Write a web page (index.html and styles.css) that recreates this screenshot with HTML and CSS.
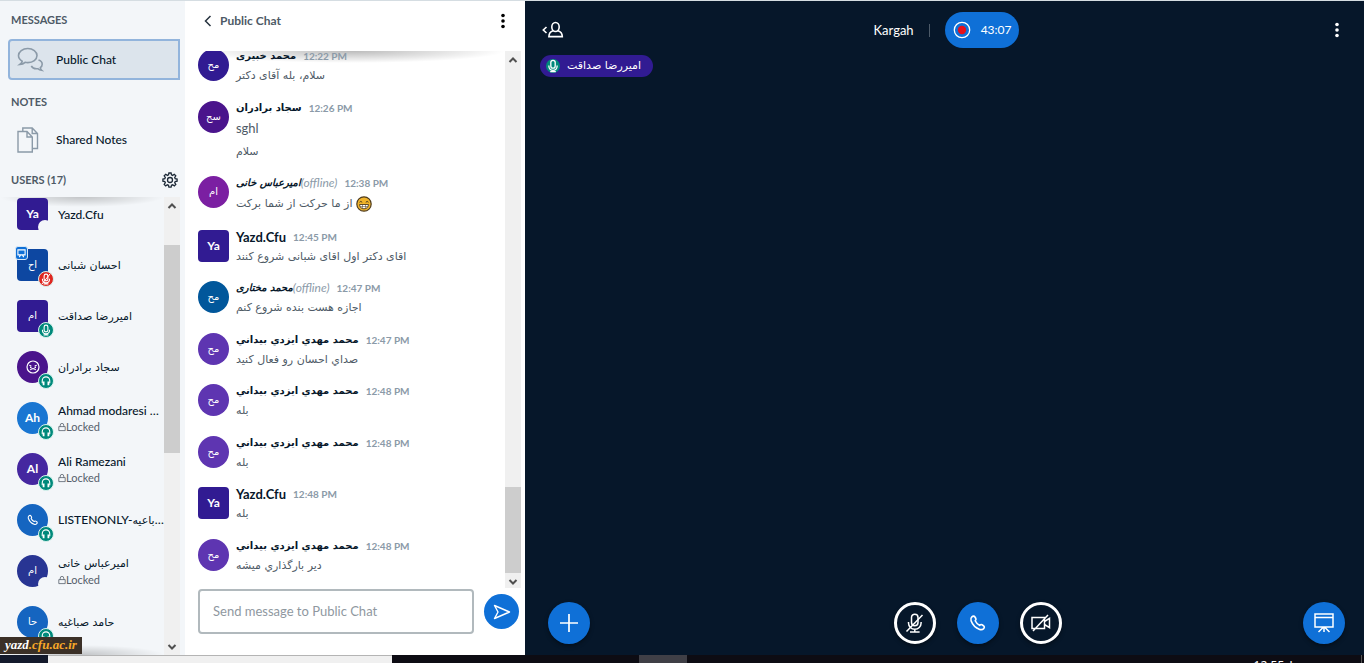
FILE: index.html
```html
<!DOCTYPE html>
<html lang="en">
<head>
<meta charset="utf-8">
<title>Kargah</title>
<link rel="stylesheet" href="styles.css">
</head>
<body>
<svg class="defs" aria-hidden="true">
  <symbol id="i-head" viewBox="0 0 16 16"><path d="M3 11V7.500a5 5 0 0 1 10 0V11" fill="none" stroke="currentColor" stroke-width="1.500"/><path d="M4.800 8.500v5M11.200 8.500v5" fill="none" stroke="currentColor" stroke-width="2.400"/></symbol>
  <symbol id="i-mic" viewBox="0 0 16 16"><rect x="5.500" y="1.500" width="5" height="9" rx="2.500" fill="none" stroke="currentColor" stroke-width="1.500"/><path d="M3.300 7.500v.8a4.700 4.700 0 0 0 9.400 0v-.8M8 12.900V14M4.800 14.500h6.400" fill="none" stroke="currentColor" stroke-width="1.500"/></symbol>
  <symbol id="i-phone" viewBox="0 0 20 20"><path d="M3.200 3.100c1.200-1.100 2.600-1 3.400.2l1 1.700c.6 1-.1 1.800-.7 2.500.9 2 2.700 3.900 4.900 5.100.7-.7 1.700-1.300 2.600-.7l1.700 1.100c1.200.8 1.200 2.200.2 3.200-1.200 1.200-2.700 1.500-4.400.9C7.600 15.600 4 12.100 2.300 7.500 1.700 5.800 1.900 4.300 3.200 3.100z" fill="none" stroke="currentColor" stroke-width="1.800" stroke-linejoin="round"/></symbol>
  <symbol id="i-lock" viewBox="0 0 10 12"><path d="M1 5.500h8v5H1zM2.800 5.500V3.700a2.200 2.200 0 0 1 4.400 0v1.800" fill="none" stroke="currentColor" stroke-width="1"/></symbol>
  <symbol id="i-up" viewBox="0 0 10 8"><path d="M1.500 6 5 2.500 8.500 6" fill="none" stroke="#505050" stroke-width="2"/></symbol>
  <symbol id="i-down" viewBox="0 0 10 8"><path d="M1.500 2 5 5.500 8.500 2" fill="none" stroke="#505050" stroke-width="2"/></symbol>
  <symbol id="i-dots" viewBox="0 0 6 16"><circle cx="3" cy="2.500" r="1.800"/><circle cx="3" cy="8" r="1.800"/><circle cx="3" cy="13.500" r="1.800"/></symbol>
</svg>
<div class="app">
  <nav class="sidebar">
    <h2>Messages</h2>
    <a class="nav-item active" href="#chat">
      <svg width="27" height="26" viewBox="0 0 27 26" fill="none" stroke="#8b9aa8" stroke-width="1.600"><path d="M5.200 14.300C3 13 1.500 11 1.500 8.600c0-4 4.200-7.100 9.300-7.100S20 4.600 20 8.600s-4.100 7-9.200 7c-1 0-1.900-.1-2.700-.3-1.500 1.400-3 2-5.300 2.200 1.300-.9 2.200-1.900 2.400-3.200z"/><path d="M21.500 13c2.200.7 3.700 2.300 3.700 4.200 0 1.400-.7 2.600-1.900 3.400 0 1 .4 1.900 1.300 2.700-1.600-.2-2.700-.7-3.600-1.600-3 .4-5.700-.7-6.700-2.800"/></svg>
      <span>Public Chat</span>
    </a>
    <h2>Notes</h2>
    <a class="nav-item" href="#notes">
      <svg width="27" height="26" viewBox="0 0 27 26" fill="none" stroke="#8b9aa8" stroke-width="1.400"><path d="M1 4.500h9l5.300 5.500v15H1zM10 4.500V10h5.300M5.800 4.500V1h9.400l5.300 5.500v15h-5M15.200 1v5.500h5.300"/></svg>
      <span>Shared Notes</span>
    </a>
    <div class="users-head">
      <h2>Users (17)</h2>
      <button class="plain" aria-label="Manage users"><svg width="16" height="16" viewBox="0 0 16 16" fill="none" stroke="#1d2a38" stroke-width="1.300"><circle cx="8" cy="8" r="2.500"/><path d="M6.900 1h2.200l.4 1.900 1.100.5 1.700-1.100 1.500 1.500-1.100 1.700.5 1.100 1.900.4v2.200l-1.900.4-.5 1.100 1.100 1.700-1.500 1.500-1.700-1.100-1.100.5-.4 1.900H6.900l-.4-1.900-1.100-.5-1.700 1.100-1.500-1.500 1.100-1.700-.5-1.100L.9 9.200V7l1.900-.4.5-1.100-1.100-1.700 1.500-1.500 1.700 1.100 1.100-.5z"/></svg></button>
    </div>
    <div class="users">
      <ul class="user-list">
        <li><span class="avatar sq indigo cut">Ya</span><span class="who">Yazd.Cfu</span></li>
        <li><span class="avatar sq navy fa">اح<i class="pres"><svg width="9" height="9" viewBox="0 0 10 10" fill="none" stroke="#fff" stroke-width="1.200"><path d="M1 1h8v5.500H1zM2.500 9 4 6.500M7.500 9 6 6.500"/></svg></i><i class="badge red"><svg width="12" height="12"><use href="#i-mic"/><path d="M2 11 10 1" stroke="#fff"/></svg></i></span><span class="who fa">احسان شبانی</span></li>
        <li><span class="avatar sq indigo fa">ام<i class="badge"><svg width="12" height="12"><use href="#i-mic"/></svg></i></span><span class="who fa">امیررضا صداقت</span></li>
        <li><span class="avatar violet"><svg width="14" height="14" viewBox="0 0 14 14" fill="none" stroke="#fff" stroke-width="1.200"><circle cx="7" cy="7" r="6"/><path d="M3.300 5.200l2 .8M10.700 5.200l-2 .8M4.300 10c1-1.800 4.400-1.800 5.400 0M4 7.300h1.500M8.500 7.300H10"/></svg><i class="badge"><svg width="12" height="12"><use href="#i-head"/></svg></i></span><span class="who fa">سجاد برادران</span></li>
        <li><span class="avatar blue">Ah<i class="badge"><svg width="12" height="12"><use href="#i-head"/></svg></i></span><span class="who">Ahmad modaresi …<small><svg width="8" height="10"><use href="#i-lock"/></svg>Locked</small></span></li>
        <li><span class="avatar purple">Al<i class="badge"><svg width="12" height="12"><use href="#i-head"/></svg></i></span><span class="who">Ali Ramezani<small><svg width="8" height="10"><use href="#i-lock"/></svg>Locked</small></span></li>
        <li><span class="avatar royal"><svg width="12" height="12"><use href="#i-phone"/></svg><i class="badge"><svg width="12" height="12"><use href="#i-head"/></svg></i></span><span class="who">LISTENONLY-<span class="fa">باعیه</span>…</span></li>
        <li><span class="avatar slate fa cut">ام</span><span class="who"><span class="fa">امیرعباس خانی</span><small><svg width="8" height="10"><use href="#i-lock"/></svg>Locked</small></span></li>
        <li><span class="avatar royal fa">حا<i class="badge"><svg width="12" height="12"><use href="#i-head"/></svg></i></span><span class="who fa">حامد صباغیه</span></li>
      </ul>
      <div class="scroll users-scroll"><svg width="10" height="8"><use href="#i-up"/></svg><div class="track"><div class="thumb"></div></div><svg width="10" height="8"><use href="#i-down"/></svg></div>
    </div>
    <div class="watermark"><b>yazd</b>.cfu.ac.ir</div>
  </nav>

  <section class="chat" id="chat">
    <header>
      <button class="plain back"><svg width="8" height="12" viewBox="0 0 8 12" fill="none" stroke="#27333f" stroke-width="1.500"><path d="M6.500 1 1.500 6l5 5"/></svg>Public Chat</button>
      <button class="plain" aria-label="Chat options"><svg width="6" height="16"><use href="#i-dots"/></svg></button>
    </header>
    <div class="log">
      <div class="messages">
        <article><span class="avatar indigo fa">مح</span><div><h3><b class="fa">محمد خبیری</b><time>12:22 PM</time></h3><p class="fa">سلام، بله آقای دکتر</p></div></article>
        <article><span class="avatar violet fa">سج</span><div><h3><b class="fa">سجاد برادران</b><time>12:26 PM</time></h3><p>sghl</p><p class="fa">سلام</p></div></article>
        <article><span class="avatar magenta fa">ام</span><div><h3><b class="fa off">امیرعباس خانی</b><em>(offline)</em><time>12:38 PM</time></h3><p class="fa emo">از ما حرکت از شما برکت <svg width="16" height="16" viewBox="0 0 16 16"><circle cx="8" cy="8" r="7.200" fill="#f0b42c" stroke="#4e3b1d" stroke-width="1.200"/><path d="M3.500 6.300q1.300-1.800 2.700 0M9.800 6.300q1.300-1.800 2.700 0" fill="none" stroke="#4e3b1d"/><path d="M3.500 8.500h9q-.5 4.300-4.500 4.300T3.500 8.500z" fill="#fff" stroke="#4e3b1d" stroke-width=".9"/><path d="M4 10.500h8M6.500 8.500v4M9.500 8.500v4" stroke="#4e3b1d" stroke-width=".5"/></svg></p></div></article>
        <article><span class="avatar sq indigo">Ya</span><div><h3><b>Yazd.Cfu</b><time>12:45 PM</time></h3><p class="fa">اقای دکتر اول اقای شبانی شروع کنند</p></div></article>
        <article><span class="avatar teal fa">مح</span><div><h3><b class="fa off">محمد مختاری</b><em>(offline)</em><time>12:47 PM</time></h3><p class="fa">اجازه هست بنده شروع کنم</p></div></article>
        <article><span class="avatar grape fa">مح</span><div><h3><b class="fa">محمد مهدي ايزدي بيداني</b><time>12:47 PM</time></h3><p class="fa">صداي احسان رو فعال كنيد</p></div></article>
        <article><span class="avatar grape fa">مح</span><div><h3><b class="fa">محمد مهدي ايزدي بيداني</b><time>12:48 PM</time></h3><p class="fa">بله</p></div></article>
        <article><span class="avatar grape fa">مح</span><div><h3><b class="fa">محمد مهدي ايزدي بيداني</b><time>12:48 PM</time></h3><p class="fa">بله</p></div></article>
        <article><span class="avatar sq indigo">Ya</span><div><h3><b>Yazd.Cfu</b><time>12:48 PM</time></h3><p class="fa">بله</p></div></article>
        <article><span class="avatar grape fa">مح</span><div><h3><b class="fa">محمد مهدي ايزدي بيداني</b><time>12:48 PM</time></h3><p class="fa">دير بارگذاري ميشه</p></div></article>
      </div>
      <div class="scroll chat-scroll"><svg width="10" height="8"><use href="#i-up"/></svg><div class="track"><div class="thumb"></div></div><svg width="10" height="8"><use href="#i-down"/></svg></div>
    </div>
    <form class="compose">
      <input type="text" placeholder="Send message to Public Chat" aria-label="Send message to Public Chat">
      <button type="button" class="send" aria-label="Send message"><svg width="18" height="16" viewBox="0 0 18 16" fill="none" stroke="#fff" stroke-width="1.400" stroke-linejoin="round"><path d="M1.500 1.500 16.500 8l-15 6.500L5 8z"/></svg></button>
    </form>
  </section>

  <main class="media">
    <header>
      <button class="plain" aria-label="Toggle user list"><svg width="22" height="18" viewBox="0 0 22 18" fill="none" stroke="#fff" stroke-width="1.600"><path d="M4.500 6 1.300 9l3.200 3"/><ellipse cx="13.500" cy="6" rx="3.700" ry="4.500"/><path d="M11 9.800c-3 .9-4 2.600-4.100 5.800h13.400c-.1-3.200-1.300-4.900-4.300-5.800"/></svg></button>
      <div class="title"><span>Kargah</span><i></i><button class="rec"><svg width="18" height="18" viewBox="0 0 18 18"><circle cx="9" cy="9" r="7.700" fill="none" stroke="#fff" stroke-width="1.300"/><circle cx="9" cy="9" r="4.200" fill="#e5101c"/></svg>43:07</button></div>
      <button class="plain more" aria-label="Options"><svg width="6" height="16"><use href="#i-dots"/></svg></button>
    </header>
    <button class="talker"><i><svg width="14" height="14"><use href="#i-mic"/></svg></i><span class="fa">امیررضا صداقت</span></button>
    <footer>
      <button class="act" aria-label="Actions"><svg width="20" height="20" viewBox="0 0 20 20"><path d="M10 1v18M1 10h18" stroke="#fff" stroke-width="1.700"/></svg></button>
      <div class="mid">
        <button class="act ring" aria-label="Unmute"><svg width="20" height="20" viewBox="0 0 20 20" fill="none" stroke="#fff" stroke-width="1.500"><rect x="6.500" y="1.200" width="6.500" height="11.500" rx="3.200"/><path d="M3.500 9v1a6.300 6.300 0 0 0 12.600 0V9M9.800 16.300v2.200M5 18.900h9.600M1.500 18.500 17.500 2"/></svg></button>
        <button class="act" aria-label="Leave audio"><svg width="18" height="18"><use href="#i-phone"/></svg></button>
        <button class="act ring" aria-label="Share webcam"><svg width="20" height="20" viewBox="0 0 20 20" fill="none" stroke="#fff" stroke-width="1.500"><path d="M1 4.500h12.500v11H1zM13.500 8.500l5-3.200v9.400l-5-3.200M2 18 17 2"/></svg></button>
      </div>
      <button class="act" aria-label="Restore presentation"><svg width="20" height="20" viewBox="0 0 20 20" fill="none" stroke="#fff" stroke-width="1.500"><path d="M1 1h18v13H1zM1 4.500h18M10 14v5M9 14.500 4.500 19M11 14.500l4.500 4.500"/></svg></button>
    </footer>
  </main>
</div>
<div class="taskbar"><div class="start"></div><div class="search"></div><div class="tasks"></div><div class="task"></div><div class="tray">12:55 ب.ظ</div></div>
</body>
</html>
```
FILE: styles.css
```css
* { box-sizing: border-box; }
body {
  margin: 0;
  height: 100vh;
  display: flex;
  flex-direction: column;
  overflow: hidden;
  font: 13px/18px Lato, "DejaVu Sans", sans-serif;
  color: #06172a;
  background: #0d0c13;
}
h2, h3, p, ul { margin: 0; padding: 0; }
button { font: inherit; border: 0; padding: 0; cursor: pointer; }
svg { flex: none; }
.defs { position: absolute; width: 0; height: 0; }
.plain { background: none; color: inherit; display: flex; align-items: center; }
.fa { font-family: "DejaVu Sans", sans-serif; font-size: 11px; }

.app {
  flex: 1;
  min-height: 0;
  display: grid;
  grid-template-columns: 185px 340px 1fr;
  border-top: 1px solid #d5dde2;
}

/* Sidebar */
.sidebar {
  position: relative;
  display: flex;
  flex-direction: column;
  min-height: 0;
  background: #f3f6f9;
  padding-top: 10px;
}
.sidebar h2 {
  font-size: 11px;
  line-height: 18px;
  font-weight: 700;
  text-transform: uppercase;
  color: #4e5a66;
  padding-left: 11px;
}
.nav-item {
  display: flex;
  align-items: center;
  gap: 12px;
  height: 41px;
  margin: 10px 5px 13px 8px;
  padding-left: 7px;
  border: 2px solid transparent;
  border-radius: 4px 0 0 4px;
  color: inherit;
  text-decoration: none;
  font-size: 12px;
  font-weight: 500;
}
.nav-item.active { background: #dce4ec; border-color: #92b4dc; }
h2 + .nav-item:not(.active) { margin: 8px 5px 11px 8px; }
.users-head { display: flex; justify-content: space-between; padding-right: 7px; }
.users { flex: 1; min-height: 0; display: flex; margin-top: 8px; padding-right: 5px; overflow: hidden; }
.user-list {
  flex: 1;
  min-width: 0;
  list-style: none;
  display: flex;
  flex-direction: column;
  justify-content: space-between;
  padding: 1px 0 17px 17px;
  background:
    radial-gradient(farthest-side at 50% 0, #0003, transparent) 50% 0 / 100% 10px no-repeat,
    radial-gradient(farthest-side at 50% 100%, #0003, transparent) 50% 100% / 100% 10px no-repeat;
}
.user-list li { display: flex; align-items: center; gap: 10px; height: 32px; }
.avatar {
  position: relative;
  flex: none;
  width: 31px;
  height: 32px;
  border-radius: 50%;
  display: flex;
  align-items: center;
  justify-content: center;
  color: #fff;
  font-size: 12px;
  font-weight: 700;
}
.avatar.fa { font-size: 10px; font-weight: 400; }
.sq { border-radius: 4px; }
.indigo { background: #311b92; }
.navy { background: #0d47a1; }
.violet { background: #4a148c; }
.blue { background: #1976d2; }
.purple { background: #4527a0; }
.royal { background: #1565c0; }
.slate { background: #283593; }
.magenta { background: #7b1fa2; }
.teal { background: #01579b; }
.grape { background: #5e35b1; }
.cut::after {
  content: "";
  position: absolute;
  right: -4px;
  bottom: -4px;
  width: 14px;
  height: 14px;
  border-radius: 50%;
  background: #f3f6f9;
}
.badge {
  position: absolute;
  right: -6px;
  bottom: -6px;
  width: 16px;
  height: 16px;
  border: 1px solid #d9f3ee;
  border-radius: 50%;
  background: #00897b;
  display: flex;
  align-items: center;
  justify-content: center;
}
.badge.red { background: #df2721; }
.pres {
  position: absolute;
  left: -2px;
  top: -3px;
  width: 13px;
  height: 14px;
  border: 1px solid #d9e8f5;
  border-radius: 3px;
  background: #0f70d7;
  display: flex;
  align-items: center;
  justify-content: center;
}
.who { min-width: 0; font-size: 12px; font-weight: 500; line-height: 17px; white-space: nowrap; }
.who.fa, .who .fa { font-size: 11px; font-weight: 400; }
.who small { display: flex; align-items: center; font-size: 11px; font-weight: 400; line-height: 16px; color: #55606b; }

.scroll { width: 16px; background: #f0f0f0; display: flex; flex-direction: column; align-items: center; padding: 5px 0 4px; flex: none; }
.track { flex: 1; width: 100%; display: flex; flex-direction: column; }
.thumb { background: #cdcdcd; }
.users-scroll .thumb { margin-top: 35px; height: 48%; }
.chat-scroll { padding-bottom: 2px; }
.chat-scroll .track { justify-content: flex-end; padding-bottom: 5px; }
.chat-scroll .thumb { height: 86px; }

.watermark {
  position: absolute;
  left: 0;
  bottom: 1px;
  width: 82px;
  height: 17px;
  padding-left: 5px;
  background: #3b3027;
  color: #f7a829;
  font: italic bold 13px/16px "Liberation Serif", serif;
}
.watermark b { color: #fff; }

/* Chat */
.chat { display: flex; flex-direction: column; min-width: 0; min-height: 0; background: #fff; padding-left: 13px; }
.chat header { display: flex; justify-content: space-between; align-items: center; height: 50px; padding: 0 19px 10px 6px; }
.back { gap: 8px; font-size: 12px; font-weight: 700; color: #4e5a66; }
.log { flex: 1; min-height: 0; display: flex; padding-right: 4px; overflow: hidden; }
.messages {
  flex: 1;
  min-width: 0;
  margin-top: -2px;
  padding-bottom: 11px;
  display: flex;
  flex-direction: column;
  justify-content: space-between;
  background: radial-gradient(farthest-side at 50% 0, #0004, transparent) 50% 2px / 100% 12px no-repeat;
}
article { display: flex; gap: 7px; }
article h3 { display: flex; align-items: center; height: 14px; font-size: 13px; font-weight: 400; }
article h3 .fa { font-size: 10px; }
.off { font-style: italic; }
article em { font-size: 12px; color: #8b9aa8; }
time { margin-left: 7px; font-size: 10px; font-weight: 700; color: #8b9aa8; }
article p { line-height: 24px; height: 24px; padding-top: 1px; color: #4e5a66; }
.emo { display: flex; align-items: center; gap: 4px; height: 26px; }
.compose { display: flex; align-items: center; gap: 10px; padding: 1px 6px 21px 0; }
.compose input {
  flex: 1;
  min-width: 0;
  height: 45px;
  border: 2px solid #b1b9bd;
  border-radius: 4px;
  padding: 0 13px 2px;
  font: inherit;
}
.compose input::placeholder { color: #8f989f; opacity: 1; }
.send { width: 35px; height: 35px; border-radius: 50%; background: #0f70d7; display: flex; align-items: center; justify-content: center; }

/* Media area */
.media { display: flex; flex-direction: column; min-width: 0; background: #06172a; color: #fff; }
.media header { display: grid; grid-template-columns: 1fr auto 1fr; align-items: center; height: 54px; padding: 4px 24px 0 17px; }
.title { display: flex; align-items: center; gap: 15px; padding-left: 11px; }
.title i { width: 1px; height: 13px; background: #4c5a68; }
.rec { display: flex; align-items: center; gap: 10px; height: 36px; padding: 0 8px; border-radius: 18px; background: #0f70d7; color: #fff; font-size: 12px; }
.more { justify-self: end; }
.more svg { fill: #fff; }
.talker { align-self: flex-start; display: flex; align-items: center; gap: 7px; height: 22px; margin-left: 15px; padding: 0 12px 0 6px; border-radius: 11px; background: #311b92; color: #fff; }
.talker i { width: 14px; height: 14px; border-radius: 50%; background: #00897b; display: flex; }
.media footer { margin-top: auto; display: flex; justify-content: space-between; padding: 0 19px 11px 23px; }
.mid { display: flex; gap: 21px; padding-left: 63px; }
.act { width: 42px; height: 42px; border-radius: 50%; background: #0f70d7; color: #fff; display: flex; align-items: center; justify-content: center; box-shadow: 0 2px 4px #0006; }
.ring { background: none; border: 3px solid #fff; }

/* Taskbar */
.taskbar { flex: none; height: 8px; display: grid; grid-template-columns: 48px 344px 247px 48px 1fr; overflow: hidden; background: #0d0c13; }
.start { background: #141a2c; }
.search { background: #f0f0f0; border-top: 1px solid #b4b4b4; }
.task { background: #3f3f46; }
.tray { justify-self: end; margin-right: 2px; padding: 4px 48px 0 0; border-right: 1px solid #555; color: #fff; font: 12px/14px "Noto Sans", "DejaVu Sans", sans-serif; white-space: nowrap; }
```
